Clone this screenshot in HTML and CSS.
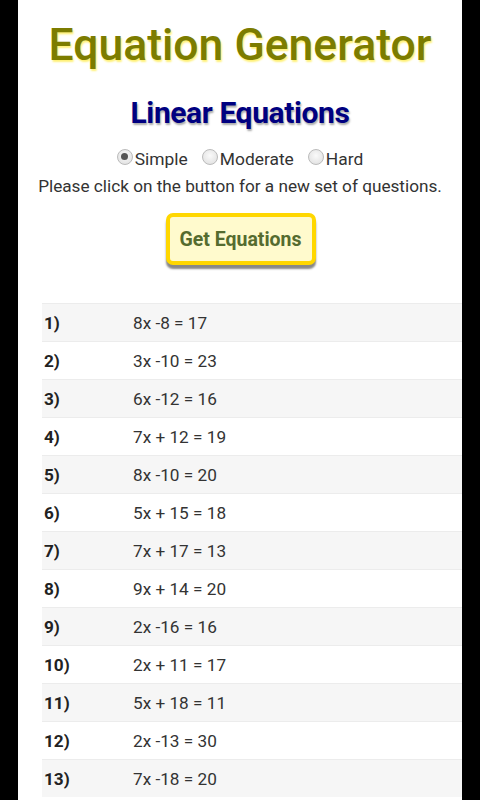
FILE: index.html
```html
<!DOCTYPE html>
<html>
<head>
<meta charset="utf-8">
<link rel="stylesheet" href="styles.css">
</head>
<body>
<div class="page">
  <h1 class="title">Equation Generator</h1>
  <h2 class="subtitle">Linear Equations</h2>
  <div class="levels">
    <label class="opt"><span class="radio checked"></span>Simple</label>
    <label class="opt"><span class="radio"></span>Moderate</label>
    <label class="opt"><span class="radio"></span>Hard</label>
  </div>
  <p class="hint">Please click on the button for a new set of questions.</p>
  <div class="btnwrap"><button class="btn">Get Equations</button></div>
  <div class="list">
    <div class="row"><span class="num">1)</span><span class="eq">8x -8 = 17</span></div>
    <div class="row"><span class="num">2)</span><span class="eq">3x -10 = 23</span></div>
    <div class="row"><span class="num">3)</span><span class="eq">6x -12 = 16</span></div>
    <div class="row"><span class="num">4)</span><span class="eq">7x + 12 = 19</span></div>
    <div class="row"><span class="num">5)</span><span class="eq">8x -10 = 20</span></div>
    <div class="row"><span class="num">6)</span><span class="eq">5x + 15 = 18</span></div>
    <div class="row"><span class="num">7)</span><span class="eq">7x + 17 = 13</span></div>
    <div class="row"><span class="num">8)</span><span class="eq">9x + 14 = 20</span></div>
    <div class="row"><span class="num">9)</span><span class="eq">2x -16 = 16</span></div>
    <div class="row"><span class="num">10)</span><span class="eq">2x + 11 = 17</span></div>
    <div class="row"><span class="num">11)</span><span class="eq">5x + 18 = 11</span></div>
    <div class="row"><span class="num">12)</span><span class="eq">2x -13 = 30</span></div>
    <div class="row"><span class="num">13)</span><span class="eq">7x -18 = 20</span></div>
  </div>
</div>
</body>
</html>
```
FILE: styles.css
```css
html, body {
  margin: 0;
  padding: 0;
  background: #000;
  height: 100%;
  overflow: hidden;
}
.page {
  margin-left: 18px;
  width: 444px;
  min-height: 800px;
  background: #fff;
  font-family: Roboto, "Liberation Sans", sans-serif;
  color: #333;
  text-align: center;
}
.title {
  margin: 0;
  padding-top: 20px;
  height: 50px;
  line-height: 50px;
  font-size: 44.5px;
  font-weight: 500;
  color: #7c7c00;
  text-shadow: 1px 2px 2px #fff176;
}
.subtitle {
  margin: 0;
  padding-top: 25px;
  height: 36px;
  line-height: 36px;
  font-size: 30px;
  font-weight: bold;
  color: #000080;
  letter-spacing: -0.4px;
  text-shadow: 1px 2px 2px #aaa;
}
.levels {
  margin-top: 18px;
  display: flex;
  justify-content: center;
  gap: 14px;
  font-size: 17.4px;
  line-height: 20px;
  color: #333;
}
.opt {
  display: flex;
  align-items: center;
}
.radio {
  width: 16px;
  height: 16px;
  border-radius: 50%;
  background: radial-gradient(circle at 50% 40%, #fafafa, #ddd);
  border: 1px solid #bbb;
  box-sizing: border-box;
  margin-right: 2px;
  margin-top: -5px;
  position: relative;
}
.radio.checked::after {
  content: "";
  position: absolute;
  left: 3.5px;
  top: 3.5px;
  width: 7px;
  height: 7px;
  border-radius: 50%;
  background: #555;
}
.hint {
  margin: 7px 0 0;
  font-size: 17.2px;
  line-height: 20px;
  color: #333;
}
.btnwrap {
  margin-top: 17px;
  display: flex;
  justify-content: center;
}
.btn {
  width: 150px;
  height: 52px;
  margin-left: 1px;
  background: #fffacd;
  border: 4px solid #ffd700;
  border-radius: 7px;
  box-shadow: 0 4px 2px #888;
  font-family: Roboto, "Liberation Sans", sans-serif;
  font-size: 19.5px;
  font-weight: bold;
  color: #556b2f;
  padding: 0;
}
.list {
  margin-top: 38px;
  margin-left: 24px;
  text-align: left;
}
.row {
  display: flex;
  align-items: center;
  height: 38px;
  box-sizing: border-box;
  border-top: 1px solid #ececec;
  font-size: 17.2px;
}
.row:nth-child(odd) {
  background: #f6f6f6;
}
.num {
  width: 89px;
  padding-left: 2px;
  font-weight: bold;
  color: #222;
}
.eq {
  color: #333;
}
```
